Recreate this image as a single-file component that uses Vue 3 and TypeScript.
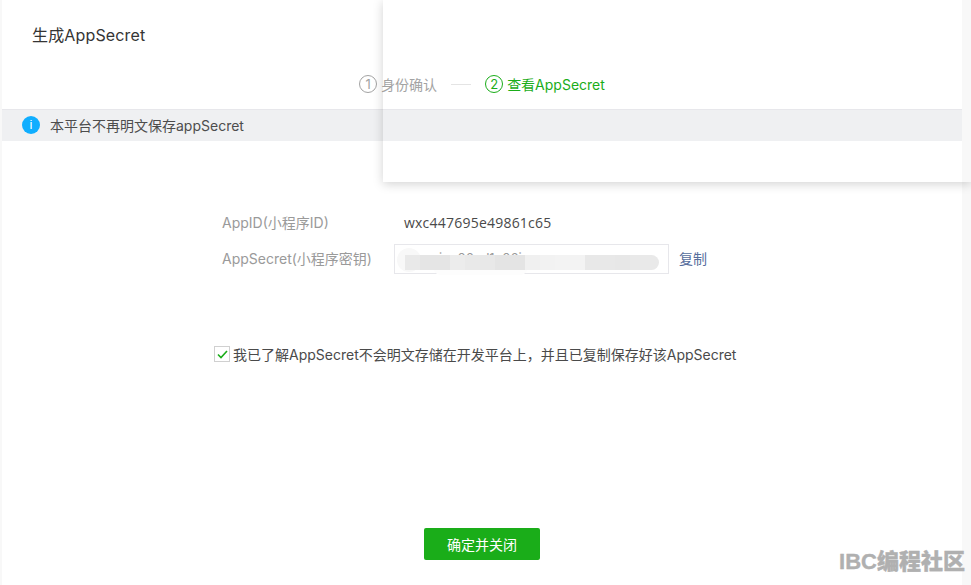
<script setup lang="ts">
const segments = [
  { w: 15, c: '#e9e9e9' }, { w: 30, c: '#e5e5e5' }, { w: 15, c: '#ececec' }, { w: 15, c: '#e9e9e9' }, { w: 15, c: '#e8e8e8' },
  { w: 30, c: '#e4e4e4' }, { w: 15, c: '#f0f0f0' }, { w: 15, c: '#f2f2f2' }, { w: 30, c: '#f3f3f3' }, { w: 30, c: '#e8e8e8' },
  { w: 15, c: '#e7e7e7' }, { w: 15, c: '#e9e9e9' }, { w: 14, c: '#e9e9e9' },
]
</script>

<template>
  <div class="page">
    <main class="dialog">
      <header class="title">生成AppSecret</header>
      <nav class="steps">
        <span class="step"><i class="num">1</i>身份确认</span>
        <span class="dash"></span>
        <span class="step active"><i class="num">2</i>查看AppSecret</span>
      </nav>
      <div class="tip">
        <span class="tip-icon">i</span>
        <span>本平台不再明文保存appSecret</span>
      </div>
      <section class="form">
        <div class="row first">
          <label>AppID(小程序ID)</label>
          <span class="value">wxc447695e49861c65</span>
        </div>
        <div class="row">
          <label>AppSecret(小程序密钥)</label>
          <div class="secret">
            <span class="secret-text">in 06 d1 06i</span>
            <span class="cap"></span>
            <span class="halo"></span>
            <div class="smear">
              <span v-for="(s, i) in segments" :key="i" :style="{ width: s.w + 'px', background: s.c }"></span>
            </div>
          </div>
          <a class="copy">复制</a>
        </div>
      </section>
      <div class="agree">
        <span class="box">
          <svg width="11" height="9" viewBox="0 0 11 9"><path d="M1 4.5 4 7.5 10 1" fill="none" stroke="#1aad19" stroke-width="1.6" /></svg>
        </span>
        <span>我已了解AppSecret不会明文存储在开发平台上，并且已复制保存好该AppSecret</span>
      </div>
      <div class="actions">
        <button class="confirm" type="button">确定并关闭</button>
      </div>
    </main>
    <aside class="overlay"></aside>
    <div class="watermark">IBC编程社区</div>
  </div>
</template>

<style scoped>
.page {
  position: relative;
  width: 971px;
  height: 585px;
  overflow: hidden;
  padding-left: 2px;
  box-sizing: border-box;
  background: #f8f8f8;
  font-family: "Inter", "Noto Sans CJK SC", sans-serif;
  font-size: 14px;
  color: #353535;
}
.dialog {
  width: 960px;
  height: 585px;
  background: #fff;
  display: flex;
  flex-direction: column;
}
.title {
  height: 70px;
  line-height: 70px;
  padding-left: 30px;
  font-size: 16px;
  letter-spacing: 0.15px;
}
.steps {
  height: 28px;
  padding: 0 0 11px;
  display: flex;
  align-items: center;
  justify-content: center;
  border-bottom: 1px solid #e7e7eb;
  box-sizing: content-box;
  color: #a3a3a3;
}
.step {
  display: flex;
  align-items: center;
  gap: 4px;
}
.num {
  width: 16px;
  height: 16px;
  border: 1px solid currentColor;
  border-radius: 50%;
  font-style: normal;
  font-size: 13px;
  line-height: 16px;
  text-align: center;
}
.active {
  color: #1aad19;
}
.dash {
  width: 20px;
  height: 1px;
  margin: 0 14px;
  background: #e4e4e4;
}
.tip {
  height: 30px;
  padding: 0 0 1px 20px;
  display: flex;
  align-items: center;
  gap: 10px;
  background: #eff0f2;
  color: #4d4d4d;
}
.tip-icon {
  width: 18px;
  height: 18px;
  border-radius: 50%;
  background: #10aeff;
  color: #fff;
  font: 13px/18px "Liberation Sans", sans-serif;
  text-align: center;
}
.form {
  display: flex;
  flex-direction: column;
  padding-left: 220px;
}
.row {
  display: flex;
  align-items: center;
  height: 30px;
  margin-bottom: 6px;
}
.row.first {
  margin-top: 66px;
}
label {
  width: 172px;
  color: #9a9a9a;
}
.first label {
  width: 182px;
}
.value {
  color: #4a4a4a;
  font-family: "Open Sans", sans-serif;
  letter-spacing: 0.22px;
}
.secret {
  position: relative;
  width: 273px;
  height: 28px;
  margin-top: 1px;
  border: 1px solid #e7e7eb;
}
.secret-text {
  position: absolute;
  left: 44px;
  top: 3px;
  color: #9a9a9a;
  font-size: 13px;
  line-height: 20px;
  word-spacing: 4px;
}
.cap {
  position: absolute;
  left: 2px;
  top: 3px;
  width: 24px;
  height: 24px;
  border-radius: 50%;
  background: #f8f8f8;
}
.halo {
  position: absolute;
  left: 38px;
  top: 18px;
  width: 95px;
  height: 12px;
  border-radius: 0 0 8px 8px;
  background: #fdfdfd;
}
.smear {
  position: absolute;
  left: 10px;
  top: 10px;
  height: 15px;
  border-radius: 0 8px 8px 0;
  display: flex;
  overflow: hidden;
}
.smear span {
  display: block;
  height: 100%;
}
.copy {
  margin-left: 10px;
  color: #566d9c;
}
.agree {
  margin-top: 65px;
  padding-left: 212px;
  display: flex;
  align-items: center;
  gap: 3px;
  height: 20px;
  color: #4a4a4a;
}
.box {
  width: 14px;
  height: 14px;
  border: 1px solid #d0d0d0;
  display: flex;
  align-items: center;
  justify-content: center;
}
.actions {
  margin-top: 164px;
  display: flex;
  padding-left: 422px;
}
.confirm {
  width: 116px;
  height: 32px;
  border: 0;
  border-radius: 2px;
  background: #1aad19;
  color: #fff;
  font: 14px "Noto Sans CJK SC", sans-serif;
}
.overlay {
  position: absolute;
  left: 383px;
  top: 0;
  width: 588px;
  height: 182px;
  box-shadow: 0 2px 10px rgba(0, 0, 0, 0.18);
}
.watermark {
  position: absolute;
  right: 6px;
  bottom: 11px;
  font-family: "Liberation Sans", "Noto Sans CJK SC", sans-serif;
  font-size: 22px;
  line-height: 24px;
  font-weight: 900;
  color: #b0b0b0;
  -webkit-text-stroke: 0.4px #b0b0b0;
}
</style>
